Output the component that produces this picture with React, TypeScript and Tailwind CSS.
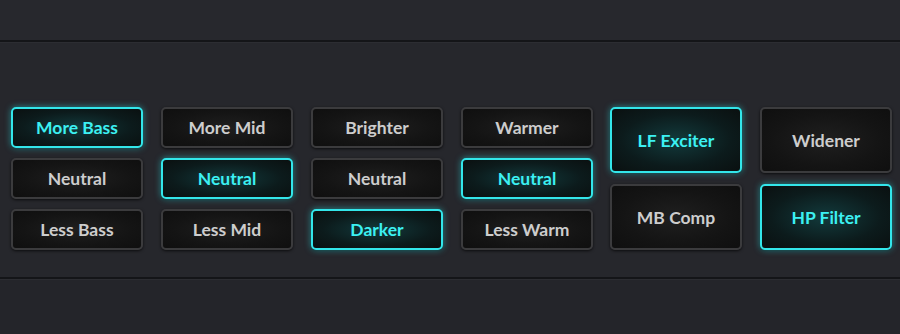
import React from "react";

type Btn = { label: string; active?: boolean };

const columns: Btn[][] = [
  [{ label: "More Bass", active: true }, { label: "Neutral" }, { label: "Less Bass" }],
  [{ label: "More Mid" }, { label: "Neutral", active: true }, { label: "Less Mid" }],
  [{ label: "Brighter" }, { label: "Neutral" }, { label: "Darker", active: true }],
  [{ label: "Warmer" }, { label: "Neutral", active: true }, { label: "Less Warm" }],
];

const fx: Btn[][] = [
  [{ label: "LF Exciter", active: true }, { label: "MB Comp" }],
  [{ label: "Widener" }, { label: "HP Filter", active: true }],
];

function PadButton({ label, active, tall }: Btn & { tall?: boolean }) {
  const size = tall ? "h-[66px]" : "h-[41px]";
  if (active) {
    return (
      <button
        className={`${size} w-[132px] rounded-[5px] border-2 border-[#33e6ea] bg-[radial-gradient(ellipse_at_center,#123a3c_0%,#0c1b1c_60%,#0a1010_100%)] pt-[2px] text-[17.5px] font-bold text-[#3cf0f2] shadow-[0_0_6px_rgba(51,230,234,0.55),0_1px_3px_rgba(0,0,0,0.6)]`}
      >
        {label}
      </button>
    );
  }
  return (
    <button
      className={`${size} w-[132px] rounded-[5px] border-2 border-[#3b3b3d] bg-[radial-gradient(ellipse_at_center,#1f1f1f_0%,#141414_60%,#0f0f0f_100%)] pt-[2px] text-[17.5px] font-bold text-[#cdcdcd] shadow-[0_1px_3px_rgba(0,0,0,0.7)]`}
    >
      {label}
    </button>
  );
}

export default function App() {
  return (
    <div
      className="flex h-[334px] w-[900px] flex-col bg-[#26272c]"
      style={{ fontFamily: "Lato, 'Open Sans', sans-serif" }}
    >
      <div className="h-[40px] bg-[#27282d]" />
      <div className="h-[2px] bg-[#141518]" />
      <div className="h-[1px] bg-[#2c2d32]" />
      <div className="flex h-[234px] items-start gap-[18px] pl-[11px] pt-[64px]">
        {columns.map((col, i) => (
          <div key={i} className="flex flex-col gap-[10px]">
            {col.map((b, j) => (
              <PadButton key={j} {...b} />
            ))}
          </div>
        ))}
        {fx.map((col, i) => (
          <div key={i} className={`flex flex-col gap-[11px] ${i === 0 ? "-ml-[1px]" : ""}`}>
            {col.map((b, j) => (
              <PadButton key={j} {...b} tall />
            ))}
          </div>
        ))}
      </div>
      <div className="h-[2px] bg-[#141518]" />
      <div className="h-[1px] bg-[#2c2d32]" />
      <div className="flex-1 bg-[#24252a]" />
    </div>
  );
}
